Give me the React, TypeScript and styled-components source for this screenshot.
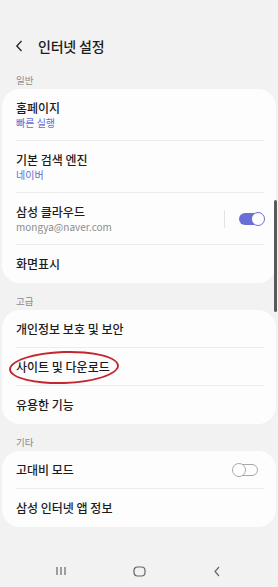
import React from 'react'
import styled, { createGlobalStyle } from 'styled-components'

const GlobalStyle = createGlobalStyle`
  html, body {
    margin: 0;
    padding: 0;
    background: #f2f2f2;
  }
  * {
    box-sizing: border-box;
  }
`

type Item = {
  title: string
  sub?: string
  subTone?: 'accent' | 'muted'
  toggle?: 'on' | 'off'
  divider?: boolean
  circled?: boolean
}

type Section = {
  label: string
  items: Item[]
}

const sections: Section[] = [
  {
    label: '일반',
    items: [
      { title: '홈페이지', sub: '빠른 실행', subTone: 'accent' },
      { title: '기본 검색 엔진', sub: '네이버', subTone: 'accent' },
      { title: '삼성 클라우드', sub: 'mongya@naver.com', subTone: 'muted', toggle: 'on', divider: true },
      { title: '화면표시' },
    ],
  },
  {
    label: '고급',
    items: [
      { title: '개인정보 보호 및 보안' },
      { title: '사이트 및 다운로드', circled: true },
      { title: '유용한 기능' },
    ],
  },
  {
    label: '기타',
    items: [
      { title: '고대비 모드', toggle: 'off' },
      { title: '삼성 인터넷 앱 정보' },
    ],
  },
]

export default function App() {
  return (
    <>
      <GlobalStyle />
      <StyledPage>
        <StyledStatusBar />
        <StyledHeader>
          <StyledBack>
            <svg width="8" height="12" viewBox="0 0 8 12">
              <path d="M6.5 1 L1.8 6 L6.5 11" fill="none" stroke="#222" strokeWidth="1.3" />
            </svg>
          </StyledBack>
          <StyledTitle>인터넷 설정</StyledTitle>
        </StyledHeader>

        {sections.map((section) => (
          <React.Fragment key={section.label}>
            <StyledSectionLabel>{section.label}</StyledSectionLabel>
            <StyledCard>
              {section.items.map((item, i) => (
                <StyledRow key={item.title} $tall={!!item.sub} $last={i === section.items.length - 1}>
                  <StyledTexts>
                    <StyledRowTitle>{item.title}</StyledRowTitle>
                    {item.sub && <StyledRowSub $tone={item.subTone}>{item.sub}</StyledRowSub>}
                  </StyledTexts>
                  {item.divider && <StyledVDivider />}
                  {item.toggle && (
                    <StyledSwitch $on={item.toggle === 'on'}>
                      <StyledKnob $on={item.toggle === 'on'} />
                    </StyledSwitch>
                  )}
                  {item.circled && <StyledCircle />}
                </StyledRow>
              ))}
            </StyledCard>
          </React.Fragment>
        ))}

        <StyledSpacer />

        <StyledNavBar>
          <svg width="12" height="10" viewBox="0 0 12 10">
            <path d="M2 1 V9 M6 1 V9 M10 1 V9" stroke="#666" strokeWidth="1.2" />
          </svg>
          <svg width="13" height="11" viewBox="0 0 13 11">
            <rect x="1" y="1" width="11" height="9" rx="3.5" fill="none" stroke="#666" strokeWidth="1.2" />
          </svg>
          <svg width="8" height="11" viewBox="0 0 8 11">
            <path d="M6 1 L2 5.5 L6 10" fill="none" stroke="#666" strokeWidth="1.2" />
          </svg>
        </StyledNavBar>

        <StyledScrollbar />
      </StyledPage>
    </>
  )
}

const StyledPage = styled.div`
  position: relative;
  display: flex;
  flex-direction: column;
  width: 278px;
  height: 587px;
  overflow: hidden;
  background: #f2f2f2;
  font-family: 'Noto Sans CJK KR', 'Noto Sans', sans-serif;
  color: #1c1c1c;
`
const StyledStatusBar = styled.div`
  height: 30px;
  flex-shrink: 0;
`
const StyledHeader = styled.div`
  display: flex;
  align-items: center;
  height: 32px;
  padding-left: 15px;
  flex-shrink: 0;
`
const StyledBack = styled.div`
  display: flex;
  align-items: center;
  width: 23px;
`
const StyledTitle = styled.div`
  font-size: 14px;
  font-weight: 500;
  letter-spacing: -0.2px;
`
const StyledSectionLabel = styled.div`
  height: 27px;
  padding: 11px 0 0 16px;
  font-size: 9.5px;
  line-height: 14px;
  color: #8a8a8a;
  flex-shrink: 0;
`
const StyledCard = styled.div`
  margin: 0 2px;
  background: #fdfdfd;
  border-radius: 18px;
  flex-shrink: 0;
`
const StyledRow = styled.div<{ $tall: boolean; $last: boolean }>`
  position: relative;
  display: flex;
  align-items: center;
  height: ${({ $tall }) => ($tall ? '52px' : '38px')};
  margin: 0 12px 0 14px;
  border-bottom: ${({ $last }) => ($last ? 'none' : '1px solid #ececec')};
`
const StyledTexts = styled.div`
  flex: 1;
  display: flex;
  flex-direction: column;
`
const StyledRowTitle = styled.div`
  font-size: 12px;
  line-height: 16px;
  font-weight: 500;
`
const StyledRowSub = styled.div<{ $tone?: 'accent' | 'muted' }>`
  font-size: 10px;
  line-height: 14px;
  color: ${({ $tone }) => ($tone === 'accent' ? '#6469cf' : '#8c8c8c')};
`
const StyledVDivider = styled.div`
  width: 1px;
  height: 18px;
  margin-right: 14px;
  background: #e4e4e4;
`
const StyledSwitch = styled.div<{ $on: boolean }>`
  position: relative;
  width: 25px;
  height: 12px;
  margin-right: ${({ $on }) => ($on ? '0' : '6px')};
  border-radius: 6px;
  background: ${({ $on }) => ($on ? '#6a6fd6' : 'transparent')};
  border: ${({ $on }) => ($on ? 'none' : '1px solid #a8a8a8')};
`
const StyledKnob = styled.div<{ $on: boolean }>`
  position: absolute;
  top: ${({ $on }) => ($on ? '-1px' : '-2px')};
  ${({ $on }) => ($on ? 'right: -1px;' : 'left: -2px;')}
  width: 14px;
  height: 14px;
  border-radius: 50%;
  background: #fff;
  border: 1px solid ${({ $on }) => ($on ? '#6a6fd6' : '#a8a8a8')};
`
const StyledCircle = styled.div`
  position: absolute;
  left: -7px;
  top: 3px;
  width: 110px;
  height: 33px;
  border: 2px solid #c4262e;
  border-radius: 50%;
  transform: rotate(-2deg);
`
const StyledSpacer = styled.div`
  flex: 1;
`
const StyledNavBar = styled.div`
  display: grid;
  grid-template-columns: repeat(3, 1fr);
  justify-items: center;
  align-items: center;
  height: 32px;
  padding: 0 22px;
  flex-shrink: 0;
`
const StyledScrollbar = styled.div`
  position: absolute;
  right: 1px;
  top: 200px;
  width: 3px;
  height: 112px;
  border-radius: 2px;
  background: #5a5a5a;
`
